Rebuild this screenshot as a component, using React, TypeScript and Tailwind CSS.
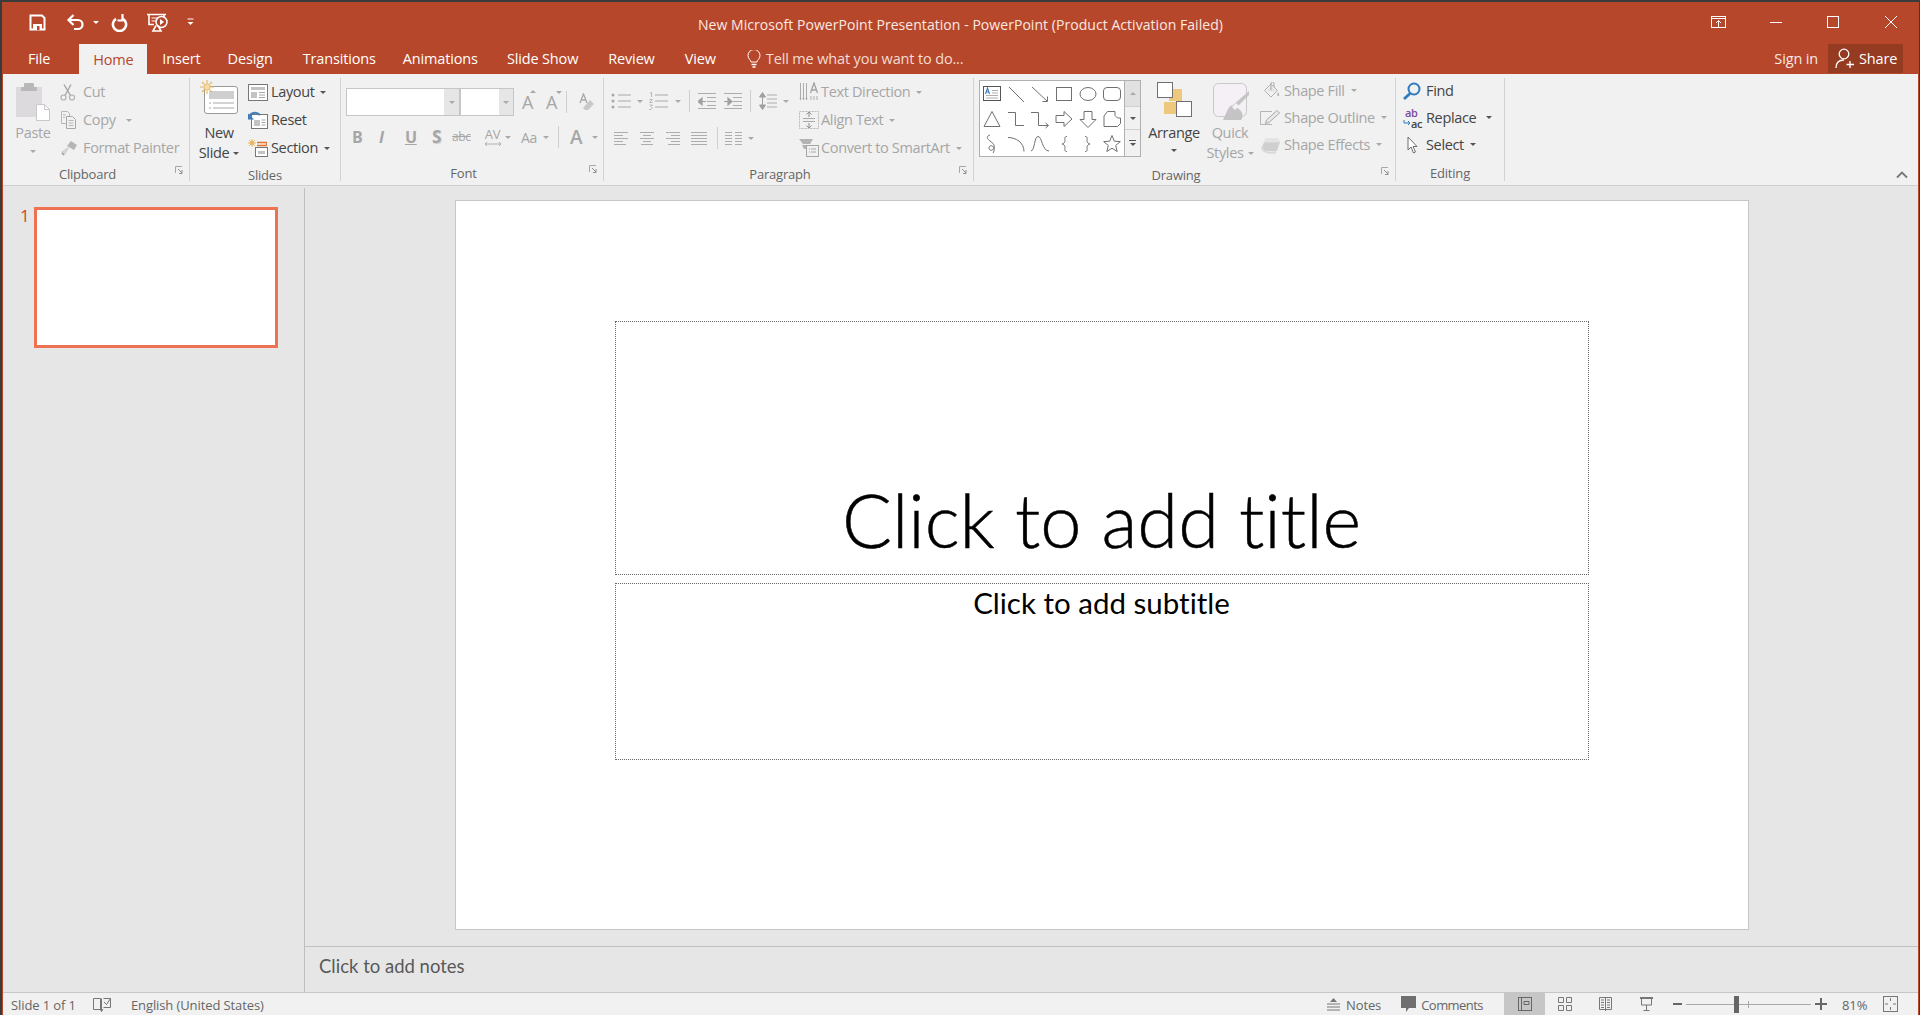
import type { ReactNode } from "react";

const ui = "font-['Open_Sans','Noto_Sans',sans-serif]";

function Caret({ color = "muted", className = "" }: { color?: "muted" | "dark" | "white"; className?: string }) {
  const top =
    color === "dark"
      ? "border-t-[#555555]"
      : color === "white"
        ? "border-t-white"
        : "border-t-[#a9a9a9]";
  return (
    <span
      className={`inline-block h-0 w-0 border-x-[3px] border-t-[3px] border-x-transparent ${top} ${className}`}
    />
  );
}

function Svg({ w, h, children, className = "" }: { w: number; h: number; children: ReactNode; className?: string }) {
  return (
    <svg width={w} height={h} viewBox={`0 0 ${w} ${h}`} fill="none" className={`shrink-0 ${className}`}>
      {children}
    </svg>
  );
}

/* quick access + window icons */
const SaveIcon = () => (
  <Svg w={17} h={17}>
    <path d="M1.500 1.500h11.500l2.500 2.500v11.500h-14z" stroke="#fff" strokeWidth="2" />
    <rect x="4" y="10" width="9" height="6" fill="#fff" />
    <rect x="8" y="12" width="2.500" height="4" fill="#b7472a" />
  </Svg>
);
const UndoIcon = () => (
  <Svg w={19} h={18}>
    <path d="M7.500 2 2.500 7l5 5M3 7h9a4.500 4.500 0 0 1 0 9H8" stroke="#fff" strokeWidth="2.200" />
  </Svg>
);
const RedoIcon = () => (
  <Svg w={17} h={19}>
    <path d="M5 5.800a6.600 6.600 0 1 0 7 0" stroke="#fff" strokeWidth="2.600" />
    <path d="M11.500 1v6.500H6.500" stroke="#fff" strokeWidth="2.200" />
  </Svg>
);
const PresentIcon = () => (
  <Svg w={21} h={19}>
    <path d="M0 1.500h19M2 1.500v10h5M17 2v3" stroke="#fff" strokeWidth="1.600" />
    <path d="M4.500 5h6M4.500 8h4" stroke="#fff" strokeWidth="1.200" />
    <circle cx="14.500" cy="9" r="5.500" stroke="#fff" strokeWidth="1.500" />
    <path d="m13 6 4 3-4 3z" fill="#fff" />
    <path d="M9 12.500 6 18h8l-3-5.500M6 18h8" stroke="#fff" strokeWidth="1.600" />
  </Svg>
);

/* clipboard */
const PasteIcon = () => (
  <Svg w={35} h={39}>
    <rect x="0" y="5" width="26" height="30" fill="#dcdadc" />
    <rect x="8" y="1" width="10" height="8" rx="1" fill="#b9b7b9" />
    <rect x="5" y="5" width="16" height="4" fill="#b9b7b9" />
    <path d="M20.500 22.500h8l5 5v11h-13z" fill="#fff" stroke="#c9c7c9" />
    <path d="M28.500 22.500v5h5" stroke="#c9c7c9" />
  </Svg>
);
const CutIcon = () => (
  <Svg w={16} h={17}>
    <circle cx="3.500" cy="13.500" r="2.500" stroke="#b0b0b0" strokeWidth="1.200" />
    <circle cx="12" cy="13.500" r="2.500" stroke="#b0b0b0" strokeWidth="1.200" />
    <path d="M5 11.500 11 .5M10.500 11.500 4 .5" stroke="#a6a6a6" strokeWidth="1.400" />
  </Svg>
);
const CopyIcon = () => (
  <Svg w={17} h={18}>
    <path d="M1.500.5h6l2 2v10h-8z" fill="#f1f1f1" stroke="#b8b8b8" />
    <path d="M6.500 5.500h6l3 3v9h-9z" fill="#f1f1f1" stroke="#a8a8a8" />
    <path d="M8.500 9.500h5M8.500 12h5M8.500 14.500h5M3 4h3M3 6.500h2" stroke="#b8b8b8" />
  </Svg>
);
const PainterIcon = () => (
  <Svg w={18} h={16}>
    <path d="m11 1 6 4-3 5-7-4z" fill="#b5b5b5" />
    <path d="M8 7 1 12l4 3 4-7z" fill="#d3d3d3" />
    <path d="m2 13 2 2" stroke="#999" strokeWidth="1.400" />
  </Svg>
);

/* slides */
const NewSlideIcon = () => (
  <Svg w={39} h={35}>
    <rect x="4.500" y="6.500" width="33" height="27" rx="2.500" fill="#fff" stroke="#9a9a9a" />
    <rect x="9" y="11" width="25" height="8" fill="#cfcfcf" />
    <path d="M9 23h2M13 23h21M9 28h2M13 28h21" stroke="#a9a9a9" />
    <circle cx="7" cy="7" r="3.200" fill="#f6dca7" stroke="#e8b765" />
    <path d="M7 0v3M7 11v3M0 7h3M11 7h3M2 2l2 2M10 10l2 2M12 2l-2 2M4 10l-2 2" stroke="#e8b765" strokeWidth="1.200" />
  </Svg>
);
const LayoutIcon = () => (
  <Svg w={20} h={17}>
    <rect x=".5" y=".5" width="19" height="16" fill="#fff" stroke="#777" />
    <rect x="3" y="3" width="14" height="3" fill="#c3c3c3" />
    <rect x="3" y="8" width="6" height="6" fill="#c3c3c3" />
    <path d="M11 8.500h6M11 11h6M11 13.500h6" stroke="#a5a5a5" />
  </Svg>
);
const ResetIcon = () => (
  <Svg w={20} h={18}>
    <rect x="3.500" y="3.500" width="16" height="14" fill="#fff" stroke="#777" />
    <rect x="6" y="9" width="6" height="6" fill="#c3c3c3" />
    <path d="M13.500 9h4M13.500 11.500h4M13.500 14h4" stroke="#a5a5a5" />
    <path d="M1 6c1-4 7-6 11-2" stroke="#3f7cb8" strokeWidth="2" />
    <path d="M0 2.500v6h6z" fill="#3f7cb8" />
  </Svg>
);
const SectionIcon = () => (
  <Svg w={20} h={18}>
    <path d="M9 3.500h10M9 6.500h10" stroke="#e2762c" strokeWidth="1.400" />
    <path d="M18.500 3v4" stroke="#e2762c" />
    <circle cx="4" cy="4" r="1.800" fill="#f6dca7" stroke="#e8b765" />
    <path d="M4 0v8M0 4h8M1 1l6 6M7 1 1 7" stroke="#e8b765" />
    <rect x="7.500" y="8.500" width="12" height="9" fill="#fff" stroke="#777" />
    <rect x="10" y="12" width="7" height="3" fill="#c3c3c3" />
  </Svg>
);

/* paragraph */
const g = "#a9a9a9";
const BulletIcon = () => (
  <Svg w={20} h={18}>
    <path d="M7 3h13M7 9h13M7 15h13" stroke={g} />
    <circle cx="2" cy="3" r="1.500" fill={g} />
    <circle cx="2" cy="9" r="1.500" fill={g} />
    <circle cx="2" cy="15" r="1.500" fill={g} />
  </Svg>
);
const NumberIcon = () => (
  <Svg w={19} h={18}>
    <path d="M6 3h13M6 9h13M6 15h13" stroke={g} />
    <path d="M1 1.500l1.500-1V5M.5 7.500h3l-3 3h3M.5 13h3l-1.500 1.500 1.500 1.500-1.500 1.500h-2" stroke={g} strokeWidth=".8" />
  </Svg>
);
const IndentIcon = ({ flip = false }: { flip?: boolean }) => (
  <Svg w={18} h={18}>
    <path d="M0 1.500h18M9 5.500h9M9 9.500h9M9 13.500h9M0 16.500h18" stroke="#adadad" />
    {flip ? (
      <path d="M0 9.500h5M4 6v7l4-3.500z" stroke="#a0a0a0" strokeWidth="1.200" fill="#a0a0a0" />
    ) : (
      <path d="M8 9.500H3M4 6v7L0 9.500z" stroke="#a0a0a0" strokeWidth="1.200" fill="#a0a0a0" />
    )}
  </Svg>
);
const LineSpaceIcon = () => (
  <Svg w={18} h={18}>
    <path d="M8 3h10M8 7h10M8 11h10M8 15h10" stroke="#adadad" />
    <path d="M3.500 3v12M.5 5l3-4.500 3 4.500zM.5 13l3 4.500 3-4.500z" stroke="#9f9f9f" fill="#9f9f9f" strokeWidth="1" />
  </Svg>
);
const AlignIcon = ({ kind }: { kind: "l" | "c" | "r" | "j" }) => {
  const d = {
    l: "M0 1.500h14M0 4.500h9M0 7.500h14M0 10.500h9M0 13.500h12",
    c: "M0 1.500h14M3 4.500h8M0 7.500h14M3 10.500h8M1 13.500h12",
    r: "M0 1.500h14M5 4.500h9M0 7.500h14M5 10.500h9M2 13.500h12",
    j: "M0 1.500h16M0 4.500h16M0 7.500h16M0 10.500h16M0 13.500h16",
  }[kind];
  return (
    <Svg w={kind === "j" ? 16 : 14} h={15}>
      <path d={d} stroke="#adadad" />
    </Svg>
  );
};
const ColumnsIcon = () => (
  <Svg w={17} h={15}>
    <path d="M0 1.500h7M10 1.500h7M0 4.500h7M10 4.500h7M0 7.500h7M10 7.500h7M0 10.500h7M10 10.500h7M0 13.500h7M10 13.500h7" stroke="#adadad" />
  </Svg>
);
const TextDirIcon = () => (
  <Svg w={19} h={21}>
    <path d="M1.500 1v15M4.500 1v15M7.500 1v15M12 14v4M15 14v4M18 14v4" stroke="#adadad" />
    <path d="m.5 16 1 2.500 1-2.500zM3.500 16l1 2.500 1-2.500zM6.500 16l1 2.500 1-2.500z" fill="#9f9f9f" />
    <path d="m11.500 11 3.500-10 3.500 10M13 8h4" stroke="#a2a2a2" strokeWidth="1.300" />
  </Svg>
);
const AlignTextIcon = () => (
  <Svg w={20} h={18}>
    <rect x=".5" y=".5" width="19" height="17" stroke="#b9b9b9" strokeDasharray="2 1" />
    <path d="M10 1v5M10 12v5M7.500 3.500 10 1l2.500 2.500M7.500 14.500 10 17l2.500-2.500" stroke="#8f8f8f" />
    <path d="M4 7.500h12M4 10.500h12" stroke="#a9a9a9" />
  </Svg>
);
const SmartArtIcon = () => (
  <Svg w={20} h={18}>
    <path d="M0 0h14l-3 5H4z" fill="#b3b3b3" />
    <path d="M3 6h9l-2 4H5z" fill="#b3b3b3" />
    <rect x="7.500" y="6.500" width="12" height="11" fill="#f1f1f1" stroke="#a6a6a6" />
    <path d="M10 10h1M12 10h5M10 13h1M12 13h5" stroke="#a6a6a6" />
  </Svg>
);

/* drawing gallery */
const s = "#707070";
const shapes: ReactNode[] = [
  <>
    <rect x="1.500" y="2.500" width="17" height="14" fill="#fff" stroke="#555" />
    <path d="M10 6.500h6M10 9h6M4 11.500h12M4 14h12" stroke="#b0b0b0" />
    <path d="m3.500 10 2-6 2 6M4.300 8h2.400" stroke="#3f7cb8" strokeWidth="1.100" />
  </>,
  <path d="m3 3 15 15" stroke={s} />,
  <>
    <path d="m2 3 15 14" stroke={s} />
    <path d="M17.500 12.500v5h-5" stroke={s} />
  </>,
  <rect x="2.500" y="3.500" width="15" height="13" stroke={s} />,
  <ellipse cx="10" cy="10" rx="8" ry="6.500" stroke={s} />,
  <rect x="1.500" y="3.500" width="17" height="13" rx="3.500" stroke={s} />,
  <path d="M10 2.500 2 17.500h16z" stroke={s} />,
  <path d="M2 3.500h7.500v13H18" stroke={s} />,
  <>
    <path d="M1 3.500h7.500v13H18" stroke={s} />
    <path d="m15.500 14 3 2.500-3 2.500" stroke={s} />
  </>,
  <path d="M2 6.500h8v-4l8 7.500-8 7.500v-4H2z" stroke={s} />,
  <path d="M6 2.500h8v8h4l-8 8-8-8h4z" stroke={s} />,
  <path d="M2 7 5.500 2.500H13v4l2.500 2.500h3v5.500l-3 3H2z" stroke={s} />,
  <path d="M8 1C4 2 5 5 8 7c3 2 5 4 4 7-1 3-5 3-5 0s4-3 5 0c.5 2 0 4-1 5" stroke={s} />,
  <path d="M2 3.500c8 0 16 5 16 14" stroke={s} />,
  <path d="M1 17c4-1 3-14 7-14.500 4-.5 4 14.500 11 14.500" stroke={s} />,
  <path d="M13 2.500c-3 0-2 2-2 4 0 2-1 3-3 3.500 2 .5 3 1.500 3 3.500 0 2-1 4 2 4" stroke={s} />,
  <path d="M7 2.500c3 0 2 2 2 4 0 2 1 3 3 3.500-2 .5-3 1.500-3 3.500 0 2 1 4-2 4" stroke={s} />,
  <path d="m10 1.500 2.300 5.700 6 .4-4.600 3.900 1.500 6-5.200-3.300-5.200 3.300 1.500-6-4.600-3.900 6-.4z" stroke={s} />,
];

const ArrangeIcon = () => (
  <Svg w={35} h={35}>
    <rect x="12" y="7" width="13" height="12" fill="#eec97d" />
    <rect x="7" y="20" width="13" height="12" fill="#eec97d" />
    <rect x=".5" y=".5" width="15" height="15" fill="#fff" stroke="#6f6f6f" />
    <rect x="19.500" y="19.500" width="15" height="15" fill="#fff" stroke="#6f6f6f" />
  </Svg>
);
const QuickStylesIcon = () => (
  <Svg w={37} h={38}>
    <rect x=".5" y=".5" width="33" height="33" rx="5" fill="#f4f0f6" stroke="#c9c9c9" />
    <path d="m36 12-14 14-3-3 17-15z" fill="#c4c4c4" />
    <path d="M23 24c-2-3-6-2-8 2l-5 11h18c3-4 2-9-5-13z" fill="#c4c4c4" />
    <path d="m19 24 4-4 3 3-4 4z" fill="#f4f0f6" />
  </Svg>
);
const FillIcon = () => (
  <Svg w={17} h={17}>
    <path d="M8 2 1.500 8.500 8 15l6.500-6.500z" stroke="#b0b0b0" />
    <path d="m4 8 4.500-4 5 5-1 .5H5z" fill="#e3e3e3" />
    <path d="M8 8V1.500a1.500 1.500 0 0 1 3 0V5" stroke="#a5a5a5" />
    <path d="M15 10c1 2 2 3 .5 4s-1.500-2-.5-4z" fill="#b0b0b0" />
  </Svg>
);
const OutlineIcon = () => (
  <Svg w={20} h={15}>
    <path d="M12 1.500H.5v13H12" stroke="#b5b5b5" />
    <path d="M17 .5 19.500 3 9 12.500l-3.500 1 1-3.500z" fill="#e8e8e8" stroke="#a8a8a8" />
  </Svg>
);
const EffectsIcon = () => (
  <Svg w={19} h={18}>
    <path d="M1 11 5 2h11l3 4-3 9H4z" fill="#cfcfcf" />
    <path d="M5 2h11l3 4-4 .5H3z" fill="#e4e4e4" />
    <path d="M1 11c0 5 8 7 14 5" stroke="#d8d8d8" strokeWidth="2" />
  </Svg>
);
const FindIcon = () => (
  <Svg w={18} h={18}>
    <circle cx="11" cy="7" r="5.500" stroke="#2f7bbd" strokeWidth="2" />
    <path d="M7 11.500 1 17" stroke="#2f7bbd" strokeWidth="2.800" />
  </Svg>
);
const SelectIcon = () => (
  <Svg w={11} h={18}>
    <path d="M1 1v13l3-3 2.500 6 2-1-2.500-5.500H10z" fill="#fff" stroke="#6f6f6f" />
  </Svg>
);
const Launcher = () => (
  <svg width="8" height="8" viewBox="0 0 8 8" fill="none" className="absolute right-[6px] top-[4px]">
    <path d="M.5 7V.5H7" stroke="#a8a8a8" />
    <path d="M3 3l4 4M7 4v3.500H4" stroke="#8f8f8f" />
  </svg>
);

function Group({ w, label, launcher, children }: { w: string; label: string; launcher?: boolean; children: ReactNode }) {
  return (
    <div className={`flex h-[103px] shrink-0 flex-col border-r border-[#d2d2d2] ${w}`}>
      <div className="flex h-[88px]">{children}</div>
      <div className={`relative flex-1 pt-[5px] text-center text-[13px] leading-[15px] tracking-[-0.2px] text-[#666666] ${launcher ? "pr-[17px]" : ""}`}>
        {label}
        {launcher && <Launcher />}
      </div>
    </div>
  );
}

function Row({ icon, label, gap, muted = false, caret = false, caretClass = "ml-[6px]", className = "h-[28px]" }: {
  icon: ReactNode;
  label: string;
  gap: string;
  muted?: boolean;
  caret?: boolean;
  caretClass?: string;
  className?: string;
}) {
  return (
    <div className={`flex items-center ${className} ${muted ? "text-[#a6a6a6]" : "text-[#444444]"}`}>
      <span className={`flex justify-center ${gap}`}>{icon}</span>
      <span className="whitespace-nowrap">{label}</span>
      {caret && <Caret color={muted ? "muted" : "dark"} className={caretClass} />}
    </div>
  );
}

const tabs = [
  { name: "Insert", ml: "ml-[15px]" },
  { name: "Design", ml: "ml-[27px]" },
  { name: "Transitions", ml: "ml-[30px]" },
  { name: "Animations", ml: "ml-[27px]" },
  { name: "Slide Show", ml: "ml-[29px]" },
  { name: "Review", ml: "ml-[30px]" },
  { name: "View", ml: "ml-[30px]" },
];

export default function App() {
  return (
    <div className={`h-[1015px] w-[1920px] overflow-hidden bg-[#3b3b3b] pl-[2px] pr-[1px] pt-[2px] text-[14px] tracking-[-0.35px] ${ui}`}>
      <div className="flex h-full flex-col border-x border-[#b7472a] bg-[#e6e6e6]">
        {/* title bar */}
        <div className="relative flex h-[42px] shrink-0 items-center bg-[#b7472a] pb-[2px] text-white">
          <div className="flex items-center pl-[26px]">
            <SaveIcon />
            <span className="ml-[20px]"><UndoIcon /></span>
            <Caret color="white" className="ml-[8px]" />
            <span className="ml-[12px]"><RedoIcon /></span>
            <span className="ml-[19px]"><PresentIcon /></span>
            <svg width="7" height="8" viewBox="0 0 7 8" className="ml-[19px]">
              <path d="M.5 1h6" stroke="#fff" />
              <path d="M.5 4h6L3.500 7z" fill="#fff" />
            </svg>
          </div>
          <div className="absolute left-0 right-0 top-[14px] text-center text-[14px] leading-[18px] tracking-[0.05px] text-[#fbe9e4]">
            New Microsoft PowerPoint Presentation - PowerPoint (Product Activation Failed)
          </div>
          <div className="ml-auto flex items-center pr-[20px]">
            <svg width="16" height="12" viewBox="0 0 16 12" fill="none" className="mr-[43px]">
              <rect x=".5" y=".5" width="14" height="11" stroke="#fff" />
              <path d="M1 2.500h14M7.500 11V4.500M5 7l2.500-2.500L10 7" stroke="#fff" />
            </svg>
            <span className="mr-[45px] h-px w-[12px] bg-white" />
            <span className="mr-[45px] h-[12px] w-[12px] border border-white" />
            <svg width="14" height="14" viewBox="0 0 14 14" fill="none">
              <path d="m1 1 12 12M13 1 1 13" stroke="#fff" />
            </svg>
          </div>
        </div>

        {/* tabs */}
        <div className="flex h-[30px] shrink-0 items-center bg-[#b7472a] text-[14.5px] tracking-[-0.15px] text-white">
          <span className="ml-[25px] mr-[29px]">File</span>
          <span className="flex h-full w-[68px] items-center justify-center bg-[#f1f1f1] pt-[1px] text-[#b7472a]">Home</span>
          {tabs.map((t) => (
            <span key={t.name} className={`${t.ml} whitespace-nowrap`}>{t.name}</span>
          ))}
          <span className="ml-[31px] flex items-center text-[#f3dcd5]">
            <svg width="14" height="18" viewBox="0 0 14 18" fill="none" className="mr-[5px]">
              <path d="M4 12c0-2-3-3-3-6.500a6 6 0 0 1 12 0C13 9 10 10 10 12z" stroke="#fff" />
              <path d="M4.500 14.500h5M5.500 17h3" stroke="#fff" strokeWidth="1.300" />
            </svg>
            Tell me what you want to do...
          </span>
          <span className="ml-auto text-[#f8e9e5]">Sign in</span>
          <span className="ml-[10px] mr-[15px] flex h-[29px] w-[75px] items-center self-start bg-[#953b22] pl-[7px]">
            <svg width="20" height="21" viewBox="0 0 20 21" fill="none" className="mr-[4px]">
              <circle cx="9" cy="6" r="4.800" stroke="#fff" strokeWidth="1.300" />
              <path d="M1 20c0-5 3-8 8-8M15 13v7M11.500 16.500h7.500" stroke="#fff" strokeWidth="1.300" />
            </svg>
            Share
          </span>
        </div>

        {/* ribbon */}
        <div className="relative flex h-[112px] shrink-0 border-b border-[#d0d0d0] bg-[#f1f1f1] pt-[4px] text-[14.5px]">
          <Group w="w-[187px]" label="Clipboard" launcher>
            <div className="ml-[11px] mt-[4px] flex w-[38px] flex-col items-center text-[#a6a6a6]">
              <PasteIcon />
              <span className="mt-[2px] leading-[20px]">Paste</span>
              <Caret className="mt-[7px]" />
            </div>
            <div className="ml-[8px] flex flex-col">
              <Row muted gap="w-[23px] justify-start" icon={<CutIcon />} label="Cut" />
              <Row muted caret caretClass="ml-[10px]" gap="w-[23px] justify-start" icon={<CopyIcon />} label="Copy" />
              <Row muted gap="w-[23px] justify-start" icon={<PainterIcon />} label="Format Painter" />
            </div>
          </Group>
          <Group w="w-[151px]" label="Slides">
            <div className="ml-[9px] mt-[2px] flex w-[40px] flex-col items-center text-[#444444]">
              <NewSlideIcon />
              <span className="mt-[8px] leading-[20px]">New</span>
              <span className="flex items-center leading-[20px]">Slide<Caret color="dark" className="ml-[4px]" /></span>
            </div>
            <div className="ml-[9px] flex flex-col">
              <Row caret caretClass="ml-[5px]" gap="w-[23px] justify-start" icon={<LayoutIcon />} label="Layout" />
              <Row gap="w-[23px] justify-start" icon={<ResetIcon />} label="Reset" />
              <Row caret gap="w-[23px] justify-start" icon={<SectionIcon />} label="Section" />
            </div>
          </Group>
          <Group w="w-[263px]" label="Font" launcher>
            <div className="ml-[5px] flex flex-col">
              <div className="mt-[10px] flex h-[28px] items-center">
                <div className="flex h-[28px] w-[168px] border border-[#c6c6c6] bg-white">
                  <div className="flex-1" />
                  <div className="flex w-[15px] items-center justify-center bg-[#e6e6e6]"><Caret /></div>
                  <div className="w-[2px] bg-[#c6c6c6]" />
                  <div className="w-[38px]" />
                  <div className="flex w-[14px] items-center justify-center bg-[#e6e6e6]"><Caret /></div>
                </div>
                <span className="relative ml-[8px] text-[18px] leading-none text-[#a6a6a6]">
                  A
                  <Caret className="absolute -top-[3px] left-[8px] rotate-180" />
                </span>
                <span className="relative ml-[13px] text-[18px] leading-none text-[#a6a6a6]">
                  A
                  <Caret className="absolute -top-[2px] left-[10px]" />
                </span>
                <span className="ml-[9px] h-[22px] w-px bg-[#cfcfcf]" />
                <svg width="15" height="18" viewBox="0 0 15 18" fill="none" className="ml-[12px]">
                  <path d="M1 10 4.500 1 8 10M2.500 7h4" stroke="#a9a9a9" strokeWidth="1.300" />
                  <path d="m4 15 7-8 4 4-6 6H6z" fill="#c9c9c9" />
                </svg>
              </div>
              <div className="mt-[7px] flex h-[28px] items-center font-bold text-[#a6a6a6]">
                <span className="ml-[6px] w-[27px] text-[16px]">B</span>
                <span className="w-[26px] text-[16px] italic">I</span>
                <span className="w-[27px] text-[16px] underline">U</span>
                <span className="w-[20px] text-[17px] [text-shadow:1px_1px_1px_#cfcfcf]">S</span>
                <span className="w-[28px] text-[12px] font-normal line-through">abc</span>
                <span className="flex w-[25px] flex-col items-center font-normal leading-none">
                  <span className="text-[13px] leading-[13px]">AV</span>
                  <svg width="18" height="6" viewBox="0 0 18 6" fill="none">
                    <path d="M1 3h16M3 1 1 3l2 2M15 1l2 2-2 2" stroke="#a9a9a9" strokeWidth=".9" />
                  </svg>
                </span>
                <Caret />
                <span className="ml-[10px] text-[14px] font-normal">Aa</span>
                <Caret className="ml-[6px]" />
                <span className="ml-[9px] h-[22px] w-px bg-[#cfcfcf]" />
                <span className="ml-[11px] text-[19px] font-semibold leading-none">A</span>
                <Caret className="ml-[10px]" />
              </div>
            </div>
          </Group>
          <Group w="w-[370px]" label="Paragraph" launcher>
            <div className="ml-[7px] flex flex-col">
              <div className="mt-[13px] flex h-[20px] items-center">
                <BulletIcon />
                <Caret className="ml-[6px]" />
                <span className="ml-[6px]"><NumberIcon /></span>
                <Caret className="ml-[7px]" />
                <span className="ml-[8px] h-[22px] w-px bg-[#cfcfcf]" />
                <span className="ml-[8px]"><IndentIcon /></span>
                <span className="ml-[8px]"><IndentIcon flip /></span>
                <span className="ml-[8px] h-[22px] w-px bg-[#cfcfcf]" />
                <span className="ml-[8px]"><LineSpaceIcon /></span>
                <Caret className="ml-[6px]" />
              </div>
              <div className="ml-[3px] mt-[17px] flex h-[20px] items-center">
                <AlignIcon kind="l" />
                <span className="ml-[12px]"><AlignIcon kind="c" /></span>
                <span className="ml-[12px]"><AlignIcon kind="r" /></span>
                <span className="ml-[11px]"><AlignIcon kind="j" /></span>
                <span className="ml-[10px] h-[22px] w-px bg-[#cfcfcf]" />
                <span className="ml-[7px]"><ColumnsIcon /></span>
                <Caret className="ml-[6px]" />
              </div>
            </div>
            <div className="ml-[10px] flex flex-col">
              <Row muted caret gap="w-[22px] justify-start" icon={<TextDirIcon />} label="Text Direction" />
              <Row muted caret gap="w-[22px] justify-start" icon={<AlignTextIcon />} label="Align Text" />
              <Row muted caret gap="w-[22px] justify-start" icon={<SmartArtIcon />} label="Convert to SmartArt" />
            </div>
          </Group>
          <Group w="w-[422px]" label="Drawing" launcher>
            <div className="ml-[5px] mt-[2px] flex h-[77px] border border-[#b0b0b0] bg-white">
              <div className="grid h-[75px] w-[144px] grid-cols-6 grid-rows-3 pt-[1px]">
                {shapes.map((shape, i) => (
                  <span key={i} className="flex items-center justify-center">
                    <Svg w={20} h={20}>{shape}</Svg>
                  </span>
                ))}
              </div>
              <div className="flex w-[16px] flex-col border-l border-[#b0b0b0] bg-[#f1f1f1]">
                <span className="flex h-[26px] items-center justify-center border-b border-[#d0d0d0] bg-[#e1e1e1]">
                  <Caret className="rotate-180" />
                </span>
                <span className="flex h-[23px] items-center justify-center border-b border-[#d0d0d0]">
                  <Caret color="dark" />
                </span>
                <span className="flex flex-1 flex-col items-center justify-center gap-[2px]">
                  <span className="h-px w-[7px] bg-[#555555]" />
                  <Caret color="dark" />
                </span>
              </div>
            </div>
            <div className="ml-[5px] flex w-[56px] flex-col items-center text-[#444444]">
              <span className="mt-[4px]"><ArrangeIcon /></span>
              <span className="mt-[6px] leading-[20px]">Arrange</span>
              <Caret color="dark" className="mt-[6px]" />
            </div>
            <div className="ml-[3px] flex w-[50px] flex-col items-center text-[#a6a6a6]">
              <span className="mt-[5px] pl-[2px]"><QuickStylesIcon /></span>
              <span className="mt-[2px] leading-[20px]">Quick</span>
              <span className="flex items-center leading-[20px]">Styles<Caret className="ml-[4px]" /></span>
            </div>
            <div className="-mt-[1px] ml-[6px] flex flex-col">
              <Row muted caret className="h-[27px]" gap="w-[23px] justify-end pr-[4px]" icon={<FillIcon />} label="Shape Fill" />
              <Row muted caret className="h-[27px]" gap="w-[23px] justify-end pr-[4px]" icon={<OutlineIcon />} label="Shape Outline" />
              <Row muted caret className="h-[27px]" gap="w-[23px] justify-end pr-[4px]" icon={<EffectsIcon />} label="Shape Effects" />
            </div>
          </Group>
          <Group w="w-[109px]" label="Editing">
            <div className="-mt-[1px] ml-[7px] flex flex-col">
              <Row className="h-[27px]" gap="w-[23px] justify-start" icon={<FindIcon />} label="Find" />
              <div className="flex h-[27px] items-center text-[#444444]">
                <span className="flex h-[22px] w-[23px] flex-col text-[11px] font-semibold leading-[11px]">
                  <span className="pl-[2px] text-[#7a4a9c]">ab</span>
                  <span className="flex items-center">
                    <svg width="8" height="8" viewBox="0 0 8 8" fill="none">
                      <path d="M1 1v3h6M5 2l2 2-2 2" stroke="#2f7bbd" />
                    </svg>
                    ac
                  </span>
                </span>
                Replace
                <Caret color="dark" className="ml-[10px]" />
              </div>
              <Row caret className="h-[27px]" gap="w-[23px] justify-center pr-[4px]" icon={<SelectIcon />} label="Select" />
            </div>
          </Group>
          <svg width="12" height="8" viewBox="0 0 12 8" fill="none" className="absolute bottom-[6px] right-[10px]">
            <path d="m1 6.500 5-5 5 5" stroke="#777777" strokeWidth="1.800" />
          </svg>
        </div>

        {/* work area */}
        <div className="flex min-h-0 flex-1 pt-[2px]">
          <div className="flex w-[301px] shrink-0 items-start pl-[17px] pt-[18px]">
            <span className="w-[14px] text-[17px] leading-[20px] text-[#d24726]">1</span>
            <div className="mt-[1px] h-[141px] w-[244px] border-[3px] border-[#ee7252] bg-white" />
          </div>
          <div className="flex min-w-0 flex-1 flex-col border-l border-[#bfbfbf]">
            <div className="flex h-[758px] shrink-0 justify-center pr-[20px] pt-[12px]">
              <div className="flex h-[730px] w-[1294px] flex-col items-center border border-[#c6c6c6] bg-white pt-[120px] font-['Lato',sans-serif] tracking-normal [font-variant-ligatures:none]">
                <div className="flex h-[254px] w-[974px] items-end justify-center border border-dotted border-[#666666] pb-[4px] text-[74px] font-light leading-[100px] text-black [-webkit-text-stroke:0.5px_#000]">
                  Click to add title
                </div>
                <div className="mt-[8px] flex h-[177px] w-[974px] justify-center border border-dotted border-[#666666] text-[29.5px] leading-[38px] text-black">
                  Click to add subtitle
                </div>
              </div>
            </div>
            <div className="flex-1 border-t border-[#c1c1c1] pl-[14px] pt-[7px] font-['Lato',sans-serif] text-[18.5px] leading-[24px] tracking-normal text-[#595959]">
              Click to add notes
            </div>
          </div>
        </div>

        {/* status bar */}
        <div className="flex h-[23px] shrink-0 items-center border-t border-[#c6c6c6] bg-[#f1f1f1] text-[13px] tracking-[-0.1px] text-[#666666]">
          <span className="ml-[8px] pt-[3px]">Slide 1 of 1</span>
          <svg width="18" height="15" viewBox="0 0 18 15" fill="none" className="ml-[17px]">
            <path d="M.5 1.500h7v11h-7zM8.500 1.500v13M7 12l1.500 2.500L10 12" stroke="#777" />
            <path d="m11 5 2.500 2.500L17.500 1.500M10.500 1.500h7v9h-7" stroke="#777" />
          </svg>
          <span className="ml-[20px] pt-[3px]">English (United States)</span>
          <div className="ml-auto flex h-full items-center">
            <svg width="13" height="13" viewBox="0 0 13 13" fill="none" className="mr-[6px]">
              <path d="M6.500 0 10 4H3z" fill="#777" />
              <path d="M0 6h13M0 9h13M0 12h13" stroke="#777" />
            </svg>
            <span className="mr-[20px] pt-[3px]">Notes</span>
            <svg width="15" height="17" viewBox="0 0 15 17" className="mr-[5px]">
              <path d="M0 0h15v12H8l-3 4v-4H0z" fill="#6f6f6f" />
            </svg>
            <span className="mr-[21px] pt-[3px] tracking-[-0.55px]">Comments</span>
            <span className="flex h-full w-[41px] items-center justify-center bg-[#c6c6c6]">
              <svg width="14" height="14" viewBox="0 0 14 14" fill="none">
                <rect x=".5" y=".5" width="13" height="13" stroke="#666" />
                <path d="M3.500 1v12M6 4.500h5v3H6z" stroke="#666" />
              </svg>
            </span>
            <svg width="14" height="14" viewBox="0 0 14 14" fill="none" className="ml-[13px]">
              <path d="M.5.500h5v5h-5zM8.500.500h5v5h-5zM.5 8.500h5v5h-5zM8.500 8.500h5v5h-5z" stroke="#777" />
            </svg>
            <svg width="13" height="14" viewBox="0 0 13 14" fill="none" className="ml-[27px]">
              <path d="M.5.500h12v12H.5zM6.500 0v14M2 3h3M2 5.500h3M2 8h3M2 10.500h3M8 3h3M8 5.500h3M8 8h3M8 10.500h3" stroke="#777" />
            </svg>
            <svg width="13" height="14" viewBox="0 0 13 14" fill="none" className="ml-[28px]">
              <path d="M0 1h13" stroke="#777" strokeWidth="2" />
              <path d="M1.500 2v6h10V2M6.500 8v5M3.500 13.500h6" stroke="#777" />
            </svg>
            <span className="ml-[20px] h-[2px] w-[9px] bg-[#666666]" />
            <div className="relative ml-[4px] h-px w-[125px] bg-[#a9a9a9]">
              <span className="absolute -top-[8px] left-[48px] h-[17px] w-[5px] bg-[#666666]" />
              <span className="absolute -top-[3px] left-[62px] h-[7px] w-px bg-[#a9a9a9]" />
            </div>
            <svg width="12" height="12" viewBox="0 0 12 12" className="ml-[4px]">
              <path d="M0 6h12M6 0v12" stroke="#666" strokeWidth="2" />
            </svg>
            <span className="ml-[15px] w-[25px] pt-[3px]">81%</span>
            <svg width="15" height="16" viewBox="0 0 15 16" fill="none" className="ml-[16px] mr-[20px]">
              <rect x=".5" y=".5" width="14" height="15" stroke="#777" />
              <path d="M7.500 2v3M7.500 11v3M2 8h3M10 8h3" stroke="#777" />
            </svg>
          </div>
        </div>
      </div>
    </div>
  );
}
